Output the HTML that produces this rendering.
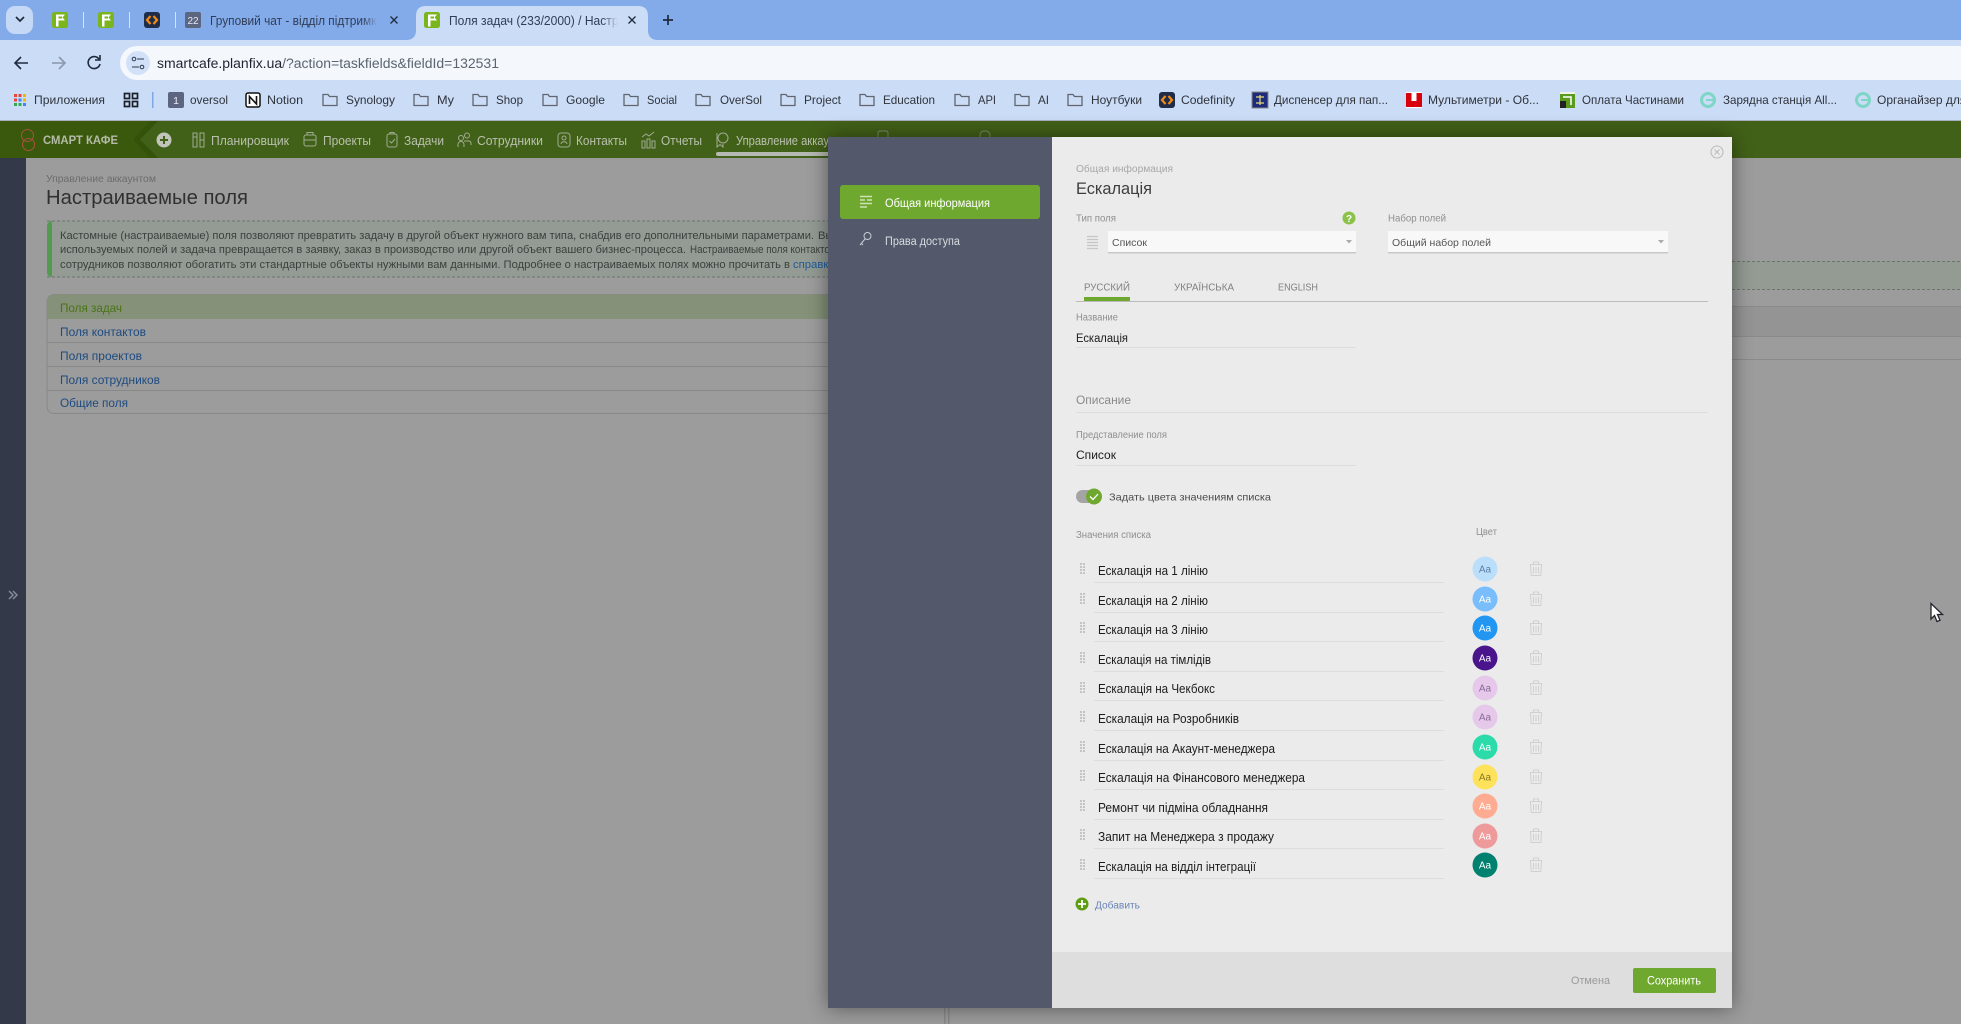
<!DOCTYPE html>
<html><head><meta charset="utf-8"><title>Поля задач</title>
<style>
html,body{margin:0;padding:0;background:#9c9c9c;width:1961px;height:1024px;overflow:hidden}
svg{display:block}
text{font-family:"Liberation Sans","DejaVu Sans",sans-serif;white-space:pre}
.t{font-size:12.5px;fill:#2f3d57}
.b{font-size:12px;fill:#2f333b}
.n{font-size:12.5px;fill:#b9c0ae}
.ni{fill:none;stroke:#a0ab92;stroke-width:1}
.c{font-size:11.3px;fill:#3c403c}
.l{font-size:12.3px;fill:#1d4a80}
.g{font-size:10px;fill:#8f8f8f}
.r{font-size:12.5px;fill:#1c1c1c}
.a{font-size:10px;text-anchor:middle;font-weight:400}
.f{fill:none;stroke:#5f6670;stroke-width:1.3}
.tr{fill:none;stroke:#d0d0d0;stroke-width:1}
</style></head><body>
<svg width="1961" height="1024" viewBox="0 0 1961 1024" xmlns="http://www.w3.org/2000/svg">
<defs>
<linearGradient id="fd" x1="0" x2="1"><stop offset="0" stop-color="#84abe9" stop-opacity="0"/><stop offset="1" stop-color="#84abe9"/></linearGradient>
<linearGradient id="fa" x1="0" x2="1"><stop offset="0" stop-color="#cbdcf6" stop-opacity="0"/><stop offset="1" stop-color="#cbdcf6"/></linearGradient>
<g id="fav"><rect x="-8" y="-8" width="16" height="16" rx="2.5" fill="#7ab51d"/><path d="M-4 6.500V-5.500H5L2.500 -2.500 5 .5H-1.500V6.500Z" fill="#fff"/><path d="M-1.500 -3.500H2V-1.500H-1.500Z" fill="#7ab51d"/></g>
<g id="cod"><rect x="-8" y="-8" width="16" height="16" rx="3" fill="#1f2c4a"/><path d="M-1.500 -4L-5 0 -1.500 4M1.500 -4L5 0 1.500 4" fill="none" stroke="#f28c13" stroke-width="2.200"/></g>
<g id="fold"><path class="f" d="M-7 -5.500H-2L-.5 -3.500H7V5.500H-7Z"/></g>
<g id="tr"><path class="tr" d="M-5.500 -4L-4.800 6.500H4.800L5.500 -4M-6 -4.500H6M-2.500 -5V-7H2.500V-5M-2.500 -2V4.500M0 -2V4.500M2.500 -2V4.500"/></g>
<g id="dr" fill="#c4c4c4"><rect x="-2.500" y="-6" width="2" height="2"/><rect x=".5" y="-6" width="2" height="2"/><rect x="-2.500" y="-3" width="2" height="2"/><rect x=".5" y="-3" width="2" height="2"/><rect x="-2.500" y="0" width="2" height="2"/><rect x=".5" y="0" width="2" height="2"/><rect x="-2.500" y="3" width="2" height="2"/><rect x=".5" y="3" width="2" height="2"/></g>
</defs>

<!-- tab strip -->
<rect width="1961" height="40" fill="#84abe9"/>
<rect x="6" y="6" width="27" height="28" rx="9" fill="#c5d8f5"/>
<path d="M16 18l4 4 4-4" fill="none" stroke="#1f2a3d" stroke-width="1.700" transform="translate(0,-1)"/>
<use href="#fav" x="60" y="20"/><rect x="83" y="12" width="1" height="16" fill="#d6e3f7"/>
<use href="#fav" x="106" y="20"/><rect x="129" y="12" width="1" height="16" fill="#d6e3f7"/>
<use href="#cod" x="152" y="20"/><rect x="175" y="12" width="1" height="16" fill="#d6e3f7"/>
<rect x="185" y="12" width="16" height="16" rx="2" fill="#5c6680"/><text x="193" y="24" font-size="10" fill="#e6e9f2" text-anchor="middle">22</text>
<text class="t" x="210" y="25" textLength="173" lengthAdjust="spacingAndGlyphs">Груповий чат - відділ підтримки</text>
<rect x="362" y="10" width="16" height="20" fill="url(#fd)"/><rect x="378" y="10" width="24" height="20" fill="#84abe9"/>
<path d="M390.500 16.500l7 7M397.500 16.500l-7 7" stroke="#1f2a3d" stroke-width="1.300"/>
<path d="M406 40Q416 40 416 30V16Q416 6 426 6H638Q648 6 648 16V30Q648 40 658 40Z" fill="#cbdcf6"/>
<use href="#fav" x="432" y="20"/>
<text class="t" x="449" y="25" textLength="183" lengthAdjust="spacingAndGlyphs">Поля задач (233/2000) / Настрой</text>
<rect x="602" y="10" width="16" height="20" fill="url(#fa)"/><rect x="618" y="10" width="24" height="20" fill="#cbdcf6"/>
<path d="M628.500 16.500l7 7M635.500 16.500l-7 7" stroke="#1f2a3d" stroke-width="1.300"/>
<path d="M663 20h10M668 15v10" stroke="#1f2a3d" stroke-width="1.700"/>

<!-- toolbar -->
<rect y="40" width="1961" height="80" fill="#cbdcf6"/>
<rect y="120" width="1961" height="1" fill="#a6aec0"/>
<path d="M28 63H16M21 57l-6 6 6 6" fill="none" stroke="#1f2a3d" stroke-width="1.600"/>
<path d="M52 63H64M59 57l6 6-6 6" fill="none" stroke="#8a97ac" stroke-width="1.600"/>
<path d="M99 59a6 6 0 1 0 1 5M100 55v5h-5" fill="none" stroke="#1f2a3d" stroke-width="1.600"/>
<path d="M137 46H1961V80H137A17 17 0 0 1 137 46Z" fill="#f4f7fc"/>
<circle cx="138" cy="63" r="12" fill="#d3e1f8"/>
<circle cx="134" cy="59" r="1.800" fill="none" stroke="#2d3a4d"/><path d="M137 59h7M132 67h7" stroke="#2d3a4d" stroke-width="1.100"/><circle cx="142" cy="67" r="1.800" fill="none" stroke="#2d3a4d"/>
<text x="157" y="68" font-size="13.500" textLength="342" lengthAdjust="spacingAndGlyphs"><tspan fill="#1f2430">smartcafe.planfix.ua</tspan><tspan fill="#5b6470">/?action=taskfields&amp;fieldId=132531</tspan></text>

<!-- bookmarks -->
<g>
<g fill="#e8453c"><rect x="14" y="94" width="3" height="3"/><rect x="18.500" y="94" width="3" height="3"/></g><rect x="23" y="94" width="3" height="3" fill="#f4b400"/>
<rect x="14" y="98.500" width="3" height="3" fill="#e8453c"/><rect x="18.500" y="98.500" width="3" height="3" fill="#4285f4"/><rect x="23" y="98.500" width="3" height="3" fill="#f4b400"/>
<rect x="14" y="103" width="3" height="3" fill="#34a853"/><rect x="18.500" y="103" width="3" height="3" fill="#34a853"/><rect x="23" y="103" width="3" height="3" fill="#4285f4"/>
<text class="b" x="34" y="104" textLength="71" lengthAdjust="spacingAndGlyphs">Приложения</text>
<g fill="none" stroke="#1b1f27" stroke-width="1.700"><rect x="124.500" y="93.500" width="5" height="5"/><rect x="132.500" y="93.500" width="5" height="5"/><rect x="124.500" y="101.500" width="5" height="5"/><rect x="132.500" y="101.500" width="5" height="5"/></g>
<rect x="152" y="92" width="1.500" height="16" fill="#7fa8e6"/>
<rect x="168" y="92" width="16" height="16" rx="2" fill="#5c6680"/><text x="176" y="104" font-size="10.500" fill="#e8ebf2" text-anchor="middle">1</text>
<text class="b" x="190" y="104" textLength="38" lengthAdjust="spacingAndGlyphs">oversol</text>
<rect x="246" y="93" width="14" height="14" rx="2" fill="#fff" stroke="#111" stroke-width="1.500"/><path d="M249.500 104V96.500L256.500 104V96" fill="none" stroke="#111" stroke-width="1.600"/>
<text class="b" x="267" y="104" textLength="36" lengthAdjust="spacingAndGlyphs">Notion</text>
<use href="#fold" x="330" y="100"/><text class="b" x="346" y="104" textLength="49" lengthAdjust="spacingAndGlyphs">Synology</text>
<use href="#fold" x="421" y="100"/><text class="b" x="437" y="104" textLength="17" lengthAdjust="spacingAndGlyphs">My</text>
<use href="#fold" x="480" y="100"/><text class="b" x="496" y="104" textLength="27" lengthAdjust="spacingAndGlyphs">Shop</text>
<use href="#fold" x="550" y="100"/><text class="b" x="566" y="104" textLength="39" lengthAdjust="spacingAndGlyphs">Google</text>
<use href="#fold" x="631" y="100"/><text class="b" x="647" y="104" textLength="30" lengthAdjust="spacingAndGlyphs">Social</text>
<use href="#fold" x="703" y="100"/><text class="b" x="720" y="104" textLength="42" lengthAdjust="spacingAndGlyphs">OverSol</text>
<use href="#fold" x="788" y="100"/><text class="b" x="804" y="104" textLength="37" lengthAdjust="spacingAndGlyphs">Project</text>
<use href="#fold" x="867" y="100"/><text class="b" x="883" y="104" textLength="52" lengthAdjust="spacingAndGlyphs">Education</text>
<use href="#fold" x="962" y="100"/><text class="b" x="978" y="104" textLength="18" lengthAdjust="spacingAndGlyphs">API</text>
<use href="#fold" x="1022" y="100"/><text class="b" x="1038" y="104" textLength="11" lengthAdjust="spacingAndGlyphs">AI</text>
<use href="#fold" x="1075" y="100"/><text class="b" x="1091" y="104" textLength="51" lengthAdjust="spacingAndGlyphs">Ноутбуки</text>
<use href="#cod" x="1167" y="100"/><text class="b" x="1181" y="104" textLength="54" lengthAdjust="spacingAndGlyphs">Codefinity</text>
<rect x="1252" y="92" width="16" height="16" fill="#1e2a7a" stroke="#888"/><path d="M1256 97h8M1256 103h8M1260 95v10" stroke="#e8d97a" stroke-width="1.200"/>
<text class="b" x="1274" y="104" textLength="114" lengthAdjust="spacingAndGlyphs">Диспенсер для пап...</text>
<rect x="1406" y="92" width="16" height="16" fill="#fff"/><path d="M1406 93h5.500v8h5v-8h5.500v14h-16Z" fill="#d8000c"/>
<text class="b" x="1428" y="104" textLength="111" lengthAdjust="spacingAndGlyphs">Мультиметри - Об...</text>
<rect x="1560" y="92" width="15" height="16" fill="#5a9a1e"/><rect x="1560" y="92" width="15" height="2" fill="#eef4ea"/><path d="M1563 97h8v8" fill="none" stroke="#fff" stroke-width="1.500"/><rect x="1560" y="101" width="6" height="7" fill="#222"/>
<text class="b" x="1582" y="104" textLength="102" lengthAdjust="spacingAndGlyphs">Оплата Частинами</text>
<circle cx="1708" cy="100" r="6.500" fill="none" stroke="#7fd6c6" stroke-width="3"/><path d="M1706 100h7" stroke="#7fd6c6" stroke-width="2"/>
<text class="b" x="1723" y="104" textLength="114" lengthAdjust="spacingAndGlyphs">Зарядна станція All...</text>
<circle cx="1863" cy="100" r="6.500" fill="none" stroke="#7fd6c6" stroke-width="3"/><path d="M1861 100h7" stroke="#7fd6c6" stroke-width="2"/>
<text class="b" x="1877" y="104">Органайзер для</text>
</g>

<!-- app nav -->
<rect y="121" width="1961" height="37" fill="#426118"/>
<path d="M0 121H158L140 139.500 158 158H0Z" fill="#3a590c"/>
<path d="M150 121H158L140 139.500 158 158H150L133 139.500Z" fill="#34520a"/>
<circle cx="27.500" cy="135.500" r="6" fill="none" stroke="#a0533a" stroke-width="1.100"/><circle cx="28.500" cy="144.500" r="6" fill="none" stroke="#a0533a" stroke-width="1.100"/>
<text x="43" y="144" font-size="11.500" font-weight="700" fill="#b4bba9" textLength="75" lengthAdjust="spacingAndGlyphs">СМАРТ КАФЕ</text>
<circle cx="164" cy="140" r="7.500" fill="#c0c4ba"/><path d="M160 140h8M164 136v8" stroke="#426118" stroke-width="2"/>
<g class="ni"><rect x="193" y="133" width="4" height="14"/><rect x="200" y="133" width="4" height="14"/><path d="M193 137h4M200 140h4"/></g>
<text class="n" x="211" y="145" textLength="78" lengthAdjust="spacingAndGlyphs">Планировщик</text>
<g class="ni"><rect x="304" y="135" width="12" height="11" rx="2"/><path d="M307 135v-2.500h6v2.500M304 140h12"/></g>
<text class="n" x="323" y="145" textLength="48" lengthAdjust="spacingAndGlyphs">Проекты</text>
<g class="ni"><rect x="387" y="134" width="10" height="13" rx="2"/><path d="M390 134v-1.500h4v1.500M389.500 141l2 2 3.500-4"/></g>
<text class="n" x="404" y="145" textLength="40" lengthAdjust="spacingAndGlyphs">Задачи</text>
<g class="ni"><circle cx="467" cy="135.500" r="2.500"/><circle cx="461" cy="138" r="2.500"/><path d="M458 147v-2.500a3 3 0 0 1 6 0V147M464 141h5a2.500 2.500 0 0 1 2 2.500V145"/></g>
<text class="n" x="477" y="145" textLength="66" lengthAdjust="spacingAndGlyphs">Сотрудники</text>
<g class="ni"><rect x="558" y="133" width="12" height="14" rx="3"/><circle cx="564" cy="138" r="2"/><path d="M561 144c.5-3 5.500-3 6 0"/></g>
<text class="n" x="576" y="145" textLength="51" lengthAdjust="spacingAndGlyphs">Контакты</text>
<g class="ni"><rect x="642" y="141" width="3" height="7"/><rect x="647" y="139" width="3" height="9"/><rect x="652" y="141" width="3" height="7"/><path d="M642 137l4-3 3 2 5-4"/></g>
<text class="n" x="661" y="145" textLength="41" lengthAdjust="spacingAndGlyphs">Отчеты</text>
<g class="ni"><circle cx="723" cy="138" r="5"/><path d="M717 133v14l3-2.500 3 2.500v-3"/></g>
<text class="n" x="736" y="145" textLength="118" lengthAdjust="spacingAndGlyphs">Управление аккаунтом</text>
<rect x="716" y="152" width="120" height="4" rx="2" fill="#b6b9b1"/>
<g class="ni" style="stroke:#7f8c6c"><rect x="878" y="131" width="10" height="14" rx="2"/><rect x="980" y="131" width="10" height="14" rx="4"/></g>

<!-- page bg -->
<rect y="158" width="1961" height="866" fill="#9c9c9c"/>
<rect y="158" width="26" height="866" fill="#343949"/>
<path d="M9 592l4 4-4 4M13 592l4 4-4 4" transform="translate(0,-1)" fill="none" stroke="#868a98" stroke-width="1.500"/>

<text x="46" y="182" font-size="10.500" fill="#6c6c6c" textLength="110" lengthAdjust="spacingAndGlyphs">Управление аккаунтом</text>
<text x="46" y="204" font-size="20px" fill="#303030" textLength="202" lengthAdjust="spacingAndGlyphs">Настраиваемые поля</text>

<!-- note -->
<rect x="47" y="221" width="820" height="56" fill="#939b94"/>
<path d="M47 221H870M47 277H870" stroke="#6d746e" stroke-dasharray="3 2"/>
<path d="M52 221a5 5 0 0 0-5 5v46a5 5 0 0 0 5 5Z" fill="#519a4e"/>
<text class="c" x="60" y="239" textLength="754" lengthAdjust="spacingAndGlyphs">Кастомные (настраиваемые) поля позволяют превратить задачу в другой объект нужного вам типа, снабдив его дополнительными параметрами.</text>
<text class="c" x="818" y="239">Вы</text>
<text class="c" x="60" y="253" textLength="626" lengthAdjust="spacingAndGlyphs">используемых полей и задача превращается в заявку, заказ в производство или другой объект вашего бизнес-процесса.</text>
<text class="c" x="690" y="253" textLength="145" lengthAdjust="spacingAndGlyphs">Настраиваемые поля контактов</text>
<text class="c" x="60" y="268" textLength="730" lengthAdjust="spacingAndGlyphs">сотрудников позволяют обогатить эти стандартные объекты нужными вам данными. Подробнее о настраиваемых полях можно прочитать в</text>
<text class="c" x="793" y="268" style="fill:#1c5a9c">справке</text>

<!-- list -->
<rect x="47" y="294.500" width="840" height="119" rx="7" fill="#9c9c9c" stroke="#888"/>
<path d="M54 294.500H887V319H47V301.500a7 7 0 0 1 7-7Z" fill="#859178"/>
<path d="M47 342.500H887M47 366.500H887M47 390.500H887" stroke="#888"/>
<text class="l" x="60" y="312" style="fill:#4a7319" textLength="62" lengthAdjust="spacingAndGlyphs">Поля задач</text>
<text class="l" x="60" y="336" textLength="86" lengthAdjust="spacingAndGlyphs">Поля контактов</text>
<text class="l" x="60" y="360" textLength="82" lengthAdjust="spacingAndGlyphs">Поля проектов</text>
<text class="l" x="60" y="384" textLength="100" lengthAdjust="spacingAndGlyphs">Поля сотрудников</text>
<text class="l" x="60" y="407" textLength="68" lengthAdjust="spacingAndGlyphs">Общие поля</text>

<!-- right of modal -->
<rect x="1732" y="261" width="229" height="28" fill="#939b93"/>
<path d="M1732 261.500H1961M1732 289.500H1961" stroke="#6d746e" stroke-dasharray="3 2"/>
<rect x="1732" y="306" width="229" height="30" fill="#949494"/>
<path d="M1732 306.500H1961M1732 336.500H1961M1732 359.500H1961" stroke="#8a8a8a"/>
<rect x="944" y="1000" width="1.500" height="24" fill="#888"/><rect x="948" y="1000" width="1.500" height="24" fill="#888"/>

<!-- modal -->
<rect x="828" y="137" width="904" height="871" fill="#ebebeb" style="filter:drop-shadow(0 0 10px rgba(0,0,0,.45))"/>
<rect x="828" y="137" width="224" height="871" fill="#53596b"/>
<rect x="840" y="185" width="200" height="34" rx="3" fill="#6fa82f"/>
<path d="M860 196.500h12M860 200h5M867 200h5M860 203.500h12M860 207h7" stroke="#cfe3b2" stroke-width="1.500"/>
<text x="885" y="207" font-size="11.500" fill="#fff" textLength="105" lengthAdjust="spacingAndGlyphs">Общая информация</text>
<circle cx="867.500" cy="236" r="3.500" fill="none" stroke="#c8cbd3"/><path d="M865 239l-5 6M861 243l2 2" fill="none" stroke="#c8cbd3"/>
<text x="885" y="245" font-size="11.500" fill="#d9dbe0" textLength="75" lengthAdjust="spacingAndGlyphs">Права доступа</text>

<rect x="1052" y="952" width="680" height="56" fill="#dedede"/>
<circle cx="1717" cy="152" r="6" fill="none" stroke="#bcbcbc" stroke-width="1.100"/><path d="M1714.500 149.500l5 5M1719.500 149.500l-5 5" stroke="#bcbcbc"/>

<text class="g" x="1076" y="172" style="fill:#a8a8a8" textLength="97" lengthAdjust="spacingAndGlyphs">Общая информация</text>
<text x="1076" y="194" font-size="16.500" fill="#3e3e3e" textLength="76" lengthAdjust="spacingAndGlyphs">Ескалація</text>
<text class="g" x="1076" y="221.500" textLength="40" lengthAdjust="spacingAndGlyphs">Тип поля</text>
<circle cx="1349" cy="218" r="6.500" fill="#8bc34a"/><text x="1349" y="222" font-size="10" font-weight="700" fill="#fff" text-anchor="middle">?</text>
<path d="M1087 236.500h11M1087 239.500h11M1087 242.500h11M1087 245.500h11M1087 248.500h11" stroke="#c6c6c6" stroke-width="1.200"/>
<rect x="1108" y="231" width="248" height="22" fill="#f8f8f8"/><rect x="1108" y="252" width="248" height="1.500" fill="#c8c8c8"/>
<text x="1112" y="246" font-size="10.500" fill="#555" textLength="35" lengthAdjust="spacingAndGlyphs">Список</text>
<path d="M1346 240h6l-3 3.500Z" fill="#aaa"/>
<text class="g" x="1388" y="221.500" textLength="58" lengthAdjust="spacingAndGlyphs">Набор полей</text>
<rect x="1388" y="231" width="280" height="22" fill="#f8f8f8"/><rect x="1388" y="252" width="280" height="1.500" fill="#c8c8c8"/>
<text x="1392" y="246" font-size="10.500" fill="#555" textLength="99" lengthAdjust="spacingAndGlyphs">Общий набор полей</text>
<path d="M1658 240h6l-3 3.500Z" fill="#aaa"/>

<text x="1084" y="290.500" font-size="10" fill="#808080" textLength="46" lengthAdjust="spacingAndGlyphs">РУССКИЙ</text>
<text x="1174" y="290.500" font-size="10" fill="#808080" textLength="60" lengthAdjust="spacingAndGlyphs">УКРАЇНСЬКА</text>
<text x="1278" y="290.500" font-size="10" fill="#808080" textLength="40" lengthAdjust="spacingAndGlyphs">ENGLISH</text>
<rect x="1076" y="301" width="632" height="1" fill="#bbb"/>
<rect x="1084" y="297" width="46" height="4" fill="#6fa82f"/>

<text class="g" x="1076" y="320.500" textLength="42" lengthAdjust="spacingAndGlyphs">Название</text>
<text x="1076" y="342" font-size="11.500" fill="#1c1c1c" textLength="52" lengthAdjust="spacingAndGlyphs">Ескалація</text>
<rect x="1076" y="347" width="280" height="1" fill="#ddd"/>
<text x="1076" y="404" font-size="11.500" fill="#8a8a8a" textLength="55" lengthAdjust="spacingAndGlyphs">Описание</text>
<rect x="1076" y="412" width="632" height="1" fill="#ddd"/>
<text class="g" x="1076" y="438" textLength="91" lengthAdjust="spacingAndGlyphs">Представление поля</text>
<text x="1076" y="459" font-size="11.500" fill="#1c1c1c" textLength="40" lengthAdjust="spacingAndGlyphs">Список</text>
<rect x="1076" y="465" width="280" height="1" fill="#ddd"/>

<rect x="1076" y="490" width="24" height="13" rx="6.500" fill="#a4a4a4"/>
<circle cx="1094" cy="496.500" r="8" fill="#6fa82f"/><path d="M1090 496.500l3 3 5-5.500" fill="none" stroke="#fff" stroke-width="1.300"/>
<text x="1109" y="500.500" font-size="10.500" fill="#4c4c4c" textLength="162" lengthAdjust="spacingAndGlyphs">Задать цвета значениям списка</text>
<text class="g" x="1076" y="538" textLength="75" lengthAdjust="spacingAndGlyphs">Значения списка</text>
<text class="g" x="1476" y="535" textLength="21" lengthAdjust="spacingAndGlyphs">Цвет</text>

<!-- rows -->
<rect x="1094" y="582" width="350" height="1" fill="#ddd"/><rect x="1094" y="612" width="350" height="1" fill="#ddd"/><rect x="1094" y="641" width="350" height="1" fill="#ddd"/><rect x="1094" y="671" width="350" height="1" fill="#ddd"/><rect x="1094" y="700" width="350" height="1" fill="#ddd"/><rect x="1094" y="730" width="350" height="1" fill="#ddd"/><rect x="1094" y="760" width="350" height="1" fill="#ddd"/><rect x="1094" y="789" width="350" height="1" fill="#ddd"/><rect x="1094" y="819" width="350" height="1" fill="#ddd"/><rect x="1094" y="848" width="350" height="1" fill="#ddd"/><rect x="1094" y="878" width="350" height="1" fill="#ddd"/>
<text class="r" x="1098" y="575" textLength="110" lengthAdjust="spacingAndGlyphs">Ескалація на 1 лінію</text>
<text class="r" x="1098" y="605" textLength="110" lengthAdjust="spacingAndGlyphs">Ескалація на 2 лінію</text>
<text class="r" x="1098" y="634" textLength="110" lengthAdjust="spacingAndGlyphs">Ескалація на 3 лінію</text>
<text class="r" x="1098" y="664" textLength="113" lengthAdjust="spacingAndGlyphs">Ескалація на тімлідів</text>
<text class="r" x="1098" y="693" textLength="117" lengthAdjust="spacingAndGlyphs">Ескалація на Чекбокс</text>
<text class="r" x="1098" y="723" textLength="141" lengthAdjust="spacingAndGlyphs">Ескалація на Розробників</text>
<text class="r" x="1098" y="753" textLength="177" lengthAdjust="spacingAndGlyphs">Ескалація на Акаунт-менеджера</text>
<text class="r" x="1098" y="782" textLength="207" lengthAdjust="spacingAndGlyphs">Ескалація на Фінансового менеджера</text>
<text class="r" x="1098" y="812" textLength="170" lengthAdjust="spacingAndGlyphs">Ремонт чи підміна обладнання</text>
<text class="r" x="1098" y="841" textLength="176" lengthAdjust="spacingAndGlyphs">Запит на Менеджера з продажу</text>
<text class="r" x="1098" y="871" textLength="158" lengthAdjust="spacingAndGlyphs">Ескалація на відділ інтеграції</text>

<use href="#dr" x="1082.500" y="569"/><use href="#dr" x="1082.500" y="599"/><use href="#dr" x="1082.500" y="628"/><use href="#dr" x="1082.500" y="658"/><use href="#dr" x="1082.500" y="688"/><use href="#dr" x="1082.500" y="717"/><use href="#dr" x="1082.500" y="747"/><use href="#dr" x="1082.500" y="776"/><use href="#dr" x="1082.500" y="806"/><use href="#dr" x="1082.500" y="835"/><use href="#dr" x="1082.500" y="865"/>

<circle cx="1485" cy="569" r="12.500" fill="#bbdefb"/><text class="a" x="1485" y="572.500" fill="#5b7fa5">Aa</text>
<circle cx="1485" cy="599" r="12.500" fill="#79bdfc"/><text class="a" x="1485" y="602.500" fill="#fff">Aa</text>
<circle cx="1485" cy="628" r="12.500" fill="#2196f3"/><text class="a" x="1485" y="631.500" fill="#fff">Aa</text>
<circle cx="1485" cy="658" r="12.500" fill="#4a148c"/><text class="a" x="1485" y="661.500" fill="#fff">Aa</text>
<circle cx="1485" cy="688" r="12.500" fill="#e6c8ea"/><text class="a" x="1485" y="691.500" fill="#8a6a9a">Aa</text>
<circle cx="1485" cy="717" r="12.500" fill="#e6c8ea"/><text class="a" x="1485" y="720.500" fill="#8a6a9a">Aa</text>
<circle cx="1485" cy="747" r="12.500" fill="#2bdcaa"/><text class="a" x="1485" y="750.500" fill="#fff">Aa</text>
<circle cx="1485" cy="777" r="12.500" fill="#ffe25c"/><text class="a" x="1485" y="780.500" fill="#8a7a20">Aa</text>
<circle cx="1485" cy="806" r="12.500" fill="#ffab91"/><text class="a" x="1485" y="809.500" fill="#fff">Aa</text>
<circle cx="1485" cy="836" r="12.500" fill="#ef9a9a"/><text class="a" x="1485" y="839.500" fill="#fff">Aa</text>
<circle cx="1485" cy="865" r="12.500" fill="#00806e"/><text class="a" x="1485" y="868.500" fill="#fff">Aa</text>

<use href="#tr" x="1536" y="569"/><use href="#tr" x="1536" y="599"/><use href="#tr" x="1536" y="628"/><use href="#tr" x="1536" y="658"/><use href="#tr" x="1536" y="688"/><use href="#tr" x="1536" y="717"/><use href="#tr" x="1536" y="747"/><use href="#tr" x="1536" y="777"/><use href="#tr" x="1536" y="806"/><use href="#tr" x="1536" y="836"/><use href="#tr" x="1536" y="865"/>

<circle cx="1082" cy="904" r="6.500" fill="#5f9e12"/><path d="M1078 904h8M1082 900v8" stroke="#fff" stroke-width="1.800"/>
<text x="1095" y="908.500" font-size="10" fill="#6a84b8" textLength="45" lengthAdjust="spacingAndGlyphs">Добавить</text>
<text x="1571" y="984" font-size="11" fill="#9a9a9a" textLength="39" lengthAdjust="spacingAndGlyphs">Отмена</text>
<rect x="1633" y="968" width="83" height="25" rx="2" fill="#6fa82f"/>
<text x="1647" y="984.500" font-size="11.500" fill="#fff" textLength="54" lengthAdjust="spacingAndGlyphs">Сохранить</text>

<!-- cursor -->
<path d="M1931 603.500V619l3.500-3.500 2.500 6 3-1.200-2.500-5.800h5Z" fill="#fff" stroke="#23232b" stroke-width="1.300"/>
</svg>
</body></html>
